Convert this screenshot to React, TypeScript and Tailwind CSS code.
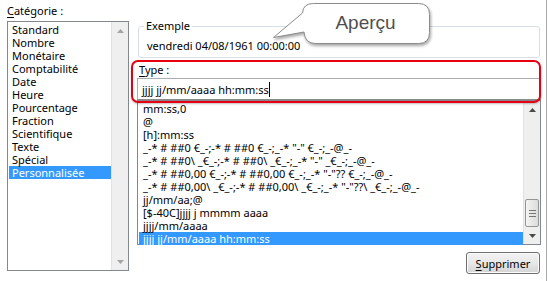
import React from "react";

function Tri({ dir, color }: { dir: "up" | "down"; color: string }) {
  return (
    <svg width="7" height="4" viewBox="0 0 7 4">
      <path d={dir === "up" ? "M0 4 L3.5 0 L7 4Z" : "M0 0 L3.5 4 L7 0Z"} fill={color} />
    </svg>
  );
}

const categories = [
  "Standard",
  "Nombre",
  "Monétaire",
  "Comptabilité",
  "Date",
  "Heure",
  "Pourcentage",
  "Fraction",
  "Scientifique",
  "Texte",
  "Spécial",
  "Personnalisée",
];

const types = [
  "mm:ss,0",
  "@",
  "[h]:mm:ss",
  '_-* # ##0 €_-;-* # ##0 €_-;_-* "-" €_-;_-@_-',
  '_-* # ##0\\ _€_-;-* # ##0\\ _€_-;_-* "-" _€_-;_-@_-',
  '_-* # ##0,00 €_-;-* # ##0,00 €_-;_-* "-"?? €_-;_-@_-',
  '_-* # ##0,00\\ _€_-;-* # ##0,00\\ _€_-;_-* "-"??\\ _€_-;_-@_-',
  "jj/mm/aa;@",
  "[$-40C]jjjj j mmmm aaaa",
  "jjjj/mm/aaaa",
  "jjjj jj/mm/aaaa hh:mm:ss",
];

export default function App() {
  return (
    <div className="relative w-[549px] h-[281px] bg-white overflow-hidden font-['Noto_Sans',sans-serif] text-[11px] text-black">
      <div className="flex w-[547px] h-full border-r border-[#a9a9a9]">
        {/* Left column */}
        <div className="ml-[7px] w-[122px] flex flex-col">
          <div className="h-[21px] pt-[3px] leading-[15px] whitespace-pre">
            <span className="underline underline-offset-2">C</span>atégorie :
          </div>
          <div className="h-[250px] border border-[#828790] flex">
            <div className="flex-1 pl-[1px] pt-[1px]">
              {categories.map((c, i) => (
                <div
                  key={c}
                  className={
                    "h-[13px] leading-[13px] pl-[3px] whitespace-nowrap " +
                    (i === categories.length - 1 ? "bg-[#3399ff] text-white" : "")
                  }
                >
                  {c}
                </div>
              ))}
            </div>
            <div className="w-[17px] h-full flex flex-col bg-[#efefef] border-l border-[#e2e2e2]">
              <div className="h-[17px] flex items-center justify-center">
                <Tri dir="up" color="#a3a3a3" />
              </div>
              <div className="flex-1" />
              <div className="h-[17px] flex items-center justify-center">
                <Tri dir="down" color="#a3a3a3" />
              </div>
            </div>
          </div>
        </div>

        {/* Right column */}
        <div className="ml-[8px] w-[404px] flex flex-col pt-[26px]">
          <div className="relative mx-[1px] h-[32px] border border-[#d5dfe5] rounded-[3px]">
            <div className="absolute -top-[9px] left-[5px] bg-white px-[2px] leading-[15px]">Exemple</div>
            <div className="pl-[8px] pt-[11px] leading-[15px]">vendredi 04/08/1961 00:00:00</div>
          </div>
          <div className="mt-[4px] h-[16px] leading-[16px] pl-[2px] whitespace-pre">
            <span className="underline underline-offset-2">T</span>ype :
          </div>
          <div className="h-[22px] border border-[#abadb3] border-b-[#8a8a8a] flex items-center pl-[4px]">
            <span className="leading-[15px]">jjjj jj/mm/aaaa hh:mm:ss</span>
            <span className="w-[1px] h-[15px] bg-black" />
          </div>
          <div className="h-[145px] border border-[#828790] flex">
            <div className="flex-1 pl-[1px] pt-[1px] min-w-0">
              {types.map((t, i) => (
                <div
                  key={i}
                  className={
                    "h-[13px] leading-[13px] pl-[4px] whitespace-pre " +
                    (i === types.length - 1 ? "bg-[#3399ff] text-white" : "")
                  }
                >
                  {t}
                </div>
              ))}
            </div>
            <div className="w-[17px] h-full flex flex-col bg-[#efefef] border-l border-[#e2e2e2]">
              <div className="h-[17px] flex items-center justify-center">
                <Tri dir="up" color="#4a4a4a" />
              </div>
              <div className="flex-1 flex flex-col justify-end items-center">
                <div className="w-[14px] h-[28px] rounded-[2px] border border-[#959595] bg-linear-to-r from-[#f4f4f4] to-[#dcdcdc] flex flex-col items-center justify-center gap-[2px]">
                  <div className="w-[7px] h-[1px] bg-[#777]" />
                  <div className="w-[7px] h-[1px] bg-[#777]" />
                  <div className="w-[7px] h-[1px] bg-[#777]" />
                </div>
              </div>
              <div className="h-[17px] flex items-center justify-center">
                <Tri dir="down" color="#4a4a4a" />
              </div>
            </div>
          </div>
          <div className="mt-[7px] mr-[1px] self-end w-[74px] h-[22px] rounded-[3px] border border-[#707070] bg-linear-to-b from-[#f3f3f3] via-[#e8e8e8] to-[#d4d4d4] shadow-[inset_0_0_0_1px_#fbfbfb] flex items-center justify-center leading-[15px]">
            <span>
              <span className="underline underline-offset-2">S</span>upprimer
            </span>
          </div>
        </div>
      </div>

      {/* Red annotation box */}
      <div className="absolute left-[131px] top-[60px] w-[410px] h-[43px] border-2 border-[#e60012] rounded-[7px] shadow-[0_1px_2px_rgba(0,0,0,0.25)]" />

      {/* Callout */}
      <svg
        className="absolute left-0 top-0 pointer-events-none drop-shadow-[1px_2px_1.5px_rgba(0,0,0,0.35)]"
        width="549"
        height="60"
        viewBox="0 0 549 60"
      >
        <path
          d="M313.5 3.5 H418.5 Q429.5 3.5 429.5 14.5 V32.5 Q429.5 43.5 418.5 43.5 H315.5 Q305 43.5 304 32 L273.5 37.5 L302.5 13 Q303 3.5 313.5 3.5 Z"
          fill="white"
          stroke="#8c8c8c"
          strokeWidth="1"
        />
      </svg>
      <div className="absolute left-[302px] top-[3px] w-[127px] h-[40px] flex items-center justify-center font-['Liberation_Sans',Arial,sans-serif] text-[19px] text-[#4f4f4f]">
        Aperçu
      </div>
    </div>
  );
}
